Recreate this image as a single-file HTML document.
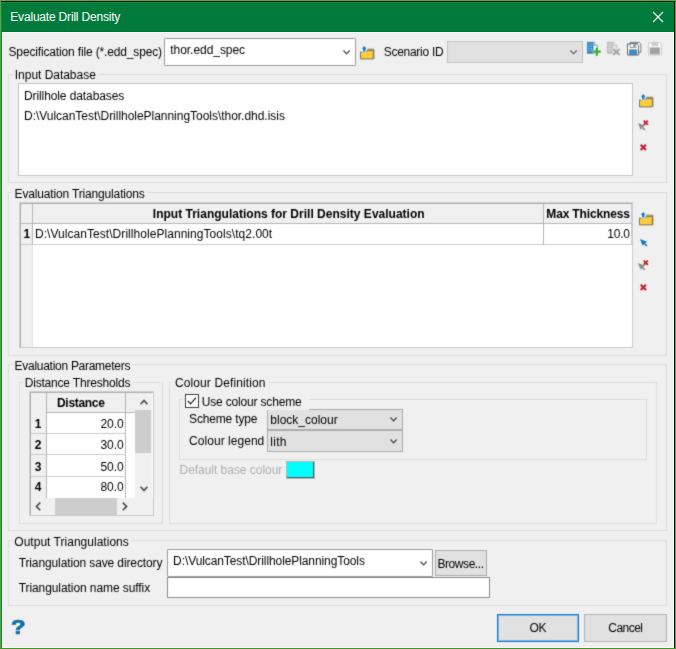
<!DOCTYPE html>
<html><head><meta charset="utf-8"><title>Evaluate Drill Density</title>
<style>
html,body{margin:0;padding:0;background:#f0f0f0;}
body{width:676px;height:649px;overflow:hidden;position:relative;font:12px/16px "Liberation Sans",sans-serif;color:#000;}
#win{position:absolute;left:0;top:0;width:676px;height:649px;background:#f0f0f0;overflow:hidden;}
#win *{box-sizing:border-box;}
.a{position:absolute;}
.t{position:absolute;white-space:pre;line-height:16px;font-size:12px;}
.grp{position:absolute;border:1px solid #dddddd;}
svg{position:absolute;overflow:visible;}
#c{position:absolute;left:0;top:0;width:676px;height:649px;filter:url(#soft);}

</style></head>
<body>
<svg width="0" height="0" style="position:absolute"><defs><filter id="soft" x="0" y="0" width="100%" height="100%" color-interpolation-filters="sRGB"><feConvolveMatrix order="3" kernelMatrix="0.02 0.09 0.02 0.09 0.56 0.09 0.02 0.09 0.02" divisor="1" edgeMode="duplicate" preserveAlpha="false"/></filter></defs></svg>
<div id="win">
<!-- window frame -->
<div class="a" style="left:0;top:0;width:676px;height:649px;background:#56a437;"></div>
<div class="a" style="left:0;top:0;width:676px;height:1px;background:#5aaf3e;"></div>
<div class="a" style="left:675px;top:0;width:1px;height:649px;background:#56ae3c;"></div>
<div class="a" style="left:0;top:648px;width:676px;height:1px;background:#3f9726;"></div>
<div class="a" style="left:1px;top:1px;width:674px;height:647px;background:#0a0a0a;"></div>
<div class="a" style="left:1px;top:2px;width:673px;height:646px;background:#158745;"></div>
<div class="a" style="left:2px;top:2px;width:672px;height:1px;background:#188a50;"></div>
<div class="a" style="left:2px;top:3px;width:672px;height:29px;background:#007b3b;"></div>
<div class="a" style="left:2px;top:31px;width:672px;height:1px;background:#007636;"></div>
<div class="a" style="left:2px;top:32px;width:672px;height:616px;background:#fbf7fb;"></div>
<div class="a" style="left:673px;top:33px;width:1px;height:615px;background:#fff;"></div>
<div class="a" style="left:2px;top:33px;width:1px;height:614px;background:#f2ecf0;"></div>
<div class="a" style="left:3px;top:33px;width:670px;height:614px;background:#f0f0f0;"></div>
<!-- close X -->
<svg style="left:653px;top:12px" width="10" height="10" viewBox="0 0 10 10"><path d="M0 0L10 10M10 0L0 10" stroke="#fff" stroke-width="1.1" fill="none"/></svg>

<span class="t" style="left:10.3px;top:8.9px;letter-spacing:-0.19px;color:#fff;">Evaluate Drill Density</span>
<div id="c">
<!-- spec combobox -->
<div class="a" style="left:164px;top:38px;width:192px;height:28px;background:#fff;border:1px solid #9a9a9a;border-radius:1px;"></div>
<svg style="left:342.5px;top:50.2px" width="8" height="5" viewBox="0 0 8 5"><path d="M0.5 0.5L3.6 3.8L6.7 0.5" stroke="#3c3c3c" stroke-width="1.15" fill="none"/></svg>
<!-- scenario combobox -->
<div class="a" style="left:447px;top:41px;width:136px;height:22px;background:#e1e1e1;border:1px solid #c4c4c4;"></div>
<svg style="left:570.4px;top:50.1px" width="8" height="5" viewBox="0 0 8 5"><path d="M0.5 0.5L3.6 3.8L6.7 0.5" stroke="#5a5a5a" stroke-width="1.1" fill="none"/></svg>

<!-- group 1: Input Database -->
<div class="grp" style="left:8px;top:74px;width:659px;height:109px;"></div>
<div class="a" style="left:18px;top:83px;width:615px;height:93px;background:#fff;border:1px solid #c2c5cc;"></div>

<!-- group 2: Evaluation Triangulations -->
<div class="grp" style="left:8px;top:192px;width:659px;height:164px;"></div>
<div class="a" style="left:19px;top:202px;width:614px;height:146px;background:#fff;border:1px solid #c6cad0;border-left-color:#cfcfcf;border-top-color:#cfcfcf;"></div>
<div class="a" style="left:20px;top:203px;width:612px;height:21px;background:#f0f0f0;border-bottom:1px solid #b6b6b6;"></div>
<div class="a" style="left:20px;top:203px;width:13px;height:144px;background:#f0f0f0;"></div>
<div class="a" style="left:32px;top:204px;width:1px;height:41px;background:#b6b6b6;"></div>
<div class="a" style="left:32px;top:245px;width:1px;height:102px;background:#e4e4e4;"></div>
<div class="a" style="left:20px;top:203px;width:612px;height:1px;background:#b0b0b0;"></div>
<div class="a" style="left:20px;top:203px;width:1px;height:144px;background:#b0b0b0;"></div>
<div class="a" style="left:21px;top:244px;width:611px;height:1px;background:#cccccc;"></div>
<div class="a" style="left:21px;top:223px;width:12px;height:1px;background:#b6b6b6;"></div>
<div class="a" style="left:543px;top:204px;width:1px;height:41px;background:#b4b4b4;"></div>
<div class="a" style="left:631px;top:204px;width:1px;height:41px;background:#cccccc;"></div>

<!-- group 3: Evaluation Parameters -->
<div class="grp" style="left:8px;top:364px;width:659px;height:167px;"></div>
<div class="grp" style="left:19px;top:382px;width:144px;height:142px;"></div>
<div class="grp" style="left:169px;top:382px;width:488px;height:142px;"></div>
<div class="grp" style="left:179px;top:399px;width:468px;height:61px;"></div>

<!-- distance table -->
<div class="a" style="left:29px;top:391px;width:125px;height:125px;background:#fff;border:1px solid #c6cad0;border-left-color:#cfcfcf;border-top-color:#cfcfcf;"></div>
<div class="a" style="left:30px;top:392px;width:105px;height:21px;background:#f0f0f0;border-bottom:1px solid #b6b6b6;"></div>
<div class="a" style="left:30px;top:392px;width:17px;height:106px;background:#f0f0f0;border-right:1px solid #b6b6b6;"></div>
<div class="a" style="left:125px;top:393px;width:1px;height:105px;background:#b4b4b4;"></div>
<div class="a" style="left:31px;top:433px;width:95px;height:1px;background:#cccccc;"></div>
<div class="a" style="left:31px;top:454px;width:95px;height:1px;background:#cccccc;"></div>
<div class="a" style="left:31px;top:476px;width:95px;height:1px;background:#cccccc;"></div>
<!-- v scrollbar -->
<div class="a" style="left:135px;top:392px;width:17px;height:106px;background:#f0f0f0;"></div>
<div class="a" style="left:135px;top:410px;width:16px;height:43px;background:#cdcdcd;"></div>
<svg style="left:139.7px;top:398.8px" width="8" height="6" viewBox="0 0 8 6"><path d="M0.6 5.2L4 1.4L7.4 5.2" stroke="#484848" stroke-width="1.6" fill="none"/></svg>
<svg style="left:139.7px;top:485.8px" width="8" height="6" viewBox="0 0 8 6"><path d="M0.6 0.8L4 4.6L7.4 0.8" stroke="#484848" stroke-width="1.6" fill="none"/></svg>
<!-- h scrollbar -->
<div class="a" style="left:30px;top:498px;width:123px;height:17px;background:#f0f0f0;"></div>
<div class="a" style="left:55px;top:498px;width:62px;height:17px;background:#cdcdcd;"></div>
<svg style="left:35.3px;top:502px" width="6" height="9" viewBox="0 0 6 9"><path d="M5.2 0.6L1.4 4.4L5.2 8.2" stroke="#484848" stroke-width="1.6" fill="none"/></svg>
<svg style="left:122.4px;top:502px" width="6" height="9" viewBox="0 0 6 9"><path d="M0.8 0.6L4.6 4.4L0.8 8.2" stroke="#484848" stroke-width="1.6" fill="none"/></svg>
<div class="a" style="left:30px;top:392px;width:123px;height:1px;background:#b0b0b0;"></div>
<div class="a" style="left:30px;top:392px;width:1px;height:123px;background:#b0b0b0;"></div>

<!-- scheme combos -->
<div class="a" style="left:267px;top:409px;width:136px;height:21px;background:#e1e1e1;border:1px solid #adadad;"></div>
<div class="a" style="left:267px;top:430px;width:136px;height:22px;background:#e1e1e1;border:1px solid #adadad;"></div>
<svg style="left:390.2px;top:417.2px" width="8" height="5" viewBox="0 0 8 5"><path d="M0.5 0.5L3.6 3.8L6.7 0.5" stroke="#3c3c3c" stroke-width="1.15" fill="none"/></svg>
<svg style="left:390.2px;top:439.2px" width="8" height="5" viewBox="0 0 8 5"><path d="M0.5 0.5L3.6 3.8L6.7 0.5" stroke="#3c3c3c" stroke-width="1.15" fill="none"/></svg>
<!-- checkbox -->
<div class="a" style="left:183px;top:392px;width:126px;height:18px;background:#f0f0f0;"></div>
<div class="a" style="left:185px;top:394px;width:14px;height:14px;background:#fff;border:1px solid #3c3c3c;"></div>
<svg style="left:185px;top:394px" width="14" height="14" viewBox="0 0 14 14"><path d="M2.8 7L5.6 9.9L11 3.6" stroke="#222" stroke-width="1.3" fill="none"/></svg>
<!-- swatch -->
<div class="a" style="left:286px;top:461px;width:29px;height:18px;background:#00ffff;border:1px solid #b6b6b6;"></div>
<div class="a" style="left:287px;top:462px;width:27px;height:16px;background:#00ffff;border-right:1px solid #4c6464;border-bottom:1px solid #4c6464;"></div>

<!-- group 4: Output -->
<div class="grp" style="left:8px;top:540px;width:659px;height:66px;"></div>
<div class="a" style="left:167px;top:549px;width:266px;height:28px;background:#fff;border:1px solid #9a9a9a;border-radius:1px;"></div>
<svg style="left:420px;top:561.2px" width="8" height="5" viewBox="0 0 8 5"><path d="M0.5 0.5L3.6 3.8L6.7 0.5" stroke="#3c3c3c" stroke-width="1.15" fill="none"/></svg>
<div class="a" style="left:435px;top:550px;width:52px;height:26px;background:#e1e1e1;border:1px solid #adadad;"></div>
<div class="a" style="left:167px;top:577px;width:323px;height:21px;background:#fff;border:1px solid #8a8a8a;"></div>

<!-- buttons -->
<div class="a" style="left:497px;top:614px;width:82px;height:28px;background:#e1e1e1;border:1px solid #0a7cd9;box-shadow:inset 0 0 0 1px rgba(0,120,215,0.42);"></div>
<div class="a" style="left:584px;top:614px;width:83px;height:28px;background:#e1e1e1;border:1px solid #b4b4b4;"></div>
<!-- help -->
<span class="t" style="left:10.7px;top:615.1px;font-size:21px;line-height:24px;font-weight:bold;color:#0e6ea8;-webkit-text-stroke:0.7px #0e6ea8;transform:scaleX(1.14);transform-origin:0 0;">?</span>

<svg style="left:359.5px;top:45.5px" width="15" height="14" viewBox="0 0 15 14">
<path d="M6.6 5.4L7.6 3.2H13.9V12.9" fill="#e8c46a" stroke="#6a675c" stroke-width="0.8" stroke-linejoin="round"/>
<path d="M0.5 6H5.9L7.9 4.6H13.3V12.9H0.5Z" fill="#fecb3a" stroke="#716c58" stroke-width="0.9" stroke-linejoin="round"/>
<path d="M4.2 -0.5L7.3 3.1H6V6.1H2.5V3.1H1.1Z" fill="#f6f6f6" stroke="#f6f6f6" stroke-width="0.8" stroke-linejoin="round"/>
<path d="M4.2 0L6.7 2.8H5.5V5.5H3V2.8H1.7Z" fill="#1a7fc0"/>
</svg>
<svg style="left:586.9px;top:42px" width="14" height="14" viewBox="0 0 14 14">
<path d="M0.3 0.2H7.2L10.6 3.6V11.4H0.3Z" fill="#fff" stroke="#6a7a88" stroke-width="0.6"/>
<path d="M0.3 0.2H6.4V11.4H0.3Z" fill="#1f7fc2"/>
<path d="M1.4 2.2H5.2M1.4 4.4H5.2M1.4 6.6H5.2M1.4 8.8H5.2" stroke="#bfe0f5" stroke-width="0.9"/>
<path d="M3.2 1V10.6" stroke="#1f7fc2" stroke-width="0.7"/>
<path d="M7.2 0.2V3.6H10.6" fill="#d8dde2" stroke="#6a7a88" stroke-width="0.6"/>
<path d="M9.8 5.2V13.8M5.6 9.6H14" stroke="#f0f0f0" stroke-width="3.4"/>
<path d="M9.8 5.6V13.7M5.8 9.65H13.8" stroke="#3aaa35" stroke-width="2.2"/>
</svg>
<svg style="left:607.2px;top:42px" width="14" height="14" viewBox="0 0 14 14">
<path d="M0.3 0.2H6.6L9.8 3.4V11.4H0.3Z" fill="#e4e4e4" stroke="#b4b4b4" stroke-width="0.6"/>
<path d="M0.3 0.2H5.8V11.4H0.3Z" fill="#bdbdbd"/>
<path d="M1.2 2.2H4.8M1.2 4.4H4.8M1.2 6.6H4.8M1.2 8.8H4.8" stroke="#e6e6e6" stroke-width="0.9"/>
<path d="M3 1V10.6" stroke="#bdbdbd" stroke-width="0.7"/>
<path d="M6.6 0.2V3.4H9.8" fill="#eee" stroke="#b4b4b4" stroke-width="0.6"/>
<path d="M6 6.7L12.8 13.1M12.8 6.7L6 13.1" stroke="#f0f0f0" stroke-width="3.2"/>
<path d="M6.2 6.9L12.6 12.9M12.6 6.9L6.2 12.9" stroke="#a4a4a4" stroke-width="2"/>
</svg>
<svg style="left:626.6px;top:41.6px" width="15" height="14" viewBox="0 0 15 14">
<path d="M3.3 0.4H12.2L13.8 2V10.2H3.3Z" fill="#fff" stroke="#5a5a5a" stroke-width="0.8"/>
<path d="M5.5 0.4H10.6V1.6H5.5Z" fill="#fff" stroke="#5a5a5a" stroke-width="0.6"/>
<path d="M0.5 1.8H10L11.6 3.4V13H0.5Z" fill="#fff" stroke="#5a5a5a" stroke-width="0.9"/>
<path d="M3.2 1.8H8.8V5.6H3.2Z" fill="#fff" stroke="#5a5a5a" stroke-width="0.7"/>
<path d="M6.3 2.6H8V4.8H6.3Z" fill="#3a8fca"/>
<path d="M2.4 7.8H9.8V12.8H2.4Z" fill="#3a8fca" stroke="#4a6a80" stroke-width="0.6"/>
</svg>
<svg style="left:647.8px;top:42.3px" width="14" height="13" viewBox="0 0 14 13">
<path d="M0.5 0.4H11.6L13.3 2.1V12.9H0.5Z" fill="#fafafa" stroke="#c6c6c6" stroke-width="0.9"/>
<path d="M3.6 0.5H10.2V3.8H3.6Z" fill="#c9c9c9"/>
<path d="M1.8 5.4H11.8V12.3H1.8Z" fill="#a3a3a3"/>
</svg>
<svg style="left:639px;top:93.7px" width="15" height="14" viewBox="0 0 15 14">
<path d="M6.6 5.4L7.6 3.2H13.9V12.9" fill="#e8c46a" stroke="#6a675c" stroke-width="0.8" stroke-linejoin="round"/>
<path d="M0.5 6H5.9L7.9 4.6H13.3V12.9H0.5Z" fill="#fecb3a" stroke="#716c58" stroke-width="0.9" stroke-linejoin="round"/>
<path d="M4.2 -0.5L7.3 3.1H6V6.1H2.5V3.1H1.1Z" fill="#f6f6f6" stroke="#f6f6f6" stroke-width="0.8" stroke-linejoin="round"/>
<path d="M4.2 0L6.7 2.8H5.5V5.5H3V2.8H1.7Z" fill="#1a7fc0"/>
</svg>
<svg style="left:637.8px;top:122.5px" width="8" height="8" viewBox="0 0 8 8">
<path d="M0 0L7 2.7L5.1 3.9L7.4 6.2L6.2 7.4L3.9 5.1L2.7 7Z" fill="#8c8c8c"/>
</svg>
<svg style="left:643.3px;top:119.6px" width="5.6" height="5.6" viewBox="0 0 5.6 5.6">
<path d="M0.7 0.7L4.8999999999999995 4.8999999999999995M4.8999999999999995 0.7L0.7 4.8999999999999995" stroke="#c4202c" stroke-width="1.9" fill="none"/>
</svg>
<svg style="left:640.1px;top:143.9px" width="6.7" height="6.7" viewBox="0 0 6.7 6.7">
<path d="M0.7 0.7L6.0 6.0M6.0 0.7L0.7 6.0" stroke="#c4202c" stroke-width="2.2" fill="none"/>
</svg>
<svg style="left:639px;top:211.6px" width="15" height="14" viewBox="0 0 15 14">
<path d="M6.6 5.4L7.6 3.2H13.9V12.9" fill="#e8c46a" stroke="#6a675c" stroke-width="0.8" stroke-linejoin="round"/>
<path d="M0.5 6H5.9L7.9 4.6H13.3V12.9H0.5Z" fill="#fecb3a" stroke="#716c58" stroke-width="0.9" stroke-linejoin="round"/>
<path d="M4.2 -0.5L7.3 3.1H6V6.1H2.5V3.1H1.1Z" fill="#f6f6f6" stroke="#f6f6f6" stroke-width="0.8" stroke-linejoin="round"/>
<path d="M4.2 0L6.7 2.8H5.5V5.5H3V2.8H1.7Z" fill="#1a7fc0"/>
</svg>
<svg style="left:639.9px;top:238.7px" width="8" height="8" viewBox="0 0 8 8">
<path d="M0 0L7 2.7L5.1 3.9L7.4 6.2L6.2 7.4L3.9 5.1L2.7 7Z" fill="#1278b6"/>
</svg>
<svg style="left:637.8px;top:262.5px" width="8" height="8" viewBox="0 0 8 8">
<path d="M0 0L7 2.7L5.1 3.9L7.4 6.2L6.2 7.4L3.9 5.1L2.7 7Z" fill="#8c8c8c"/>
</svg>
<svg style="left:643.3px;top:259.7px" width="5.6" height="5.6" viewBox="0 0 5.6 5.6">
<path d="M0.7 0.7L4.8999999999999995 4.8999999999999995M4.8999999999999995 0.7L0.7 4.8999999999999995" stroke="#c4202c" stroke-width="1.9" fill="none"/>
</svg>
<svg style="left:640.1px;top:283.8px" width="6.7" height="6.7" viewBox="0 0 6.7 6.7">
<path d="M0.7 0.7L6.0 6.0M6.0 0.7L0.7 6.0" stroke="#c4202c" stroke-width="2.2" fill="none"/>
</svg>
<span class="t" style="left:8.5px;top:44.0px;letter-spacing:-0.15px;">Specification file (*.edd_spec)</span>
<span class="t" style="left:170.3px;top:41.9px;letter-spacing:-0.05px;">thor.edd_spec</span>
<span class="t" style="left:383.7px;top:44.2px;letter-spacing:-0.27px;">Scenario ID</span>
<span class="t" style="left:14.8px;top:69.4px;letter-spacing:-0.03px;background:#f0f0f0;padding:0 2px;margin-left:-2px;line-height:12px;">Input Database</span>
<span class="t" style="left:24.0px;top:87.7px;letter-spacing:-0.10px;">Drillhole databases</span>
<span class="t" style="left:24.0px;top:107.6px;letter-spacing:-0.03px;">D:\VulcanTest\DrillholePlanningTools\thor.dhd.isis</span>
<span class="t" style="left:14.6px;top:187.5px;letter-spacing:-0.16px;background:#f0f0f0;padding:0 2px;margin-left:-2px;line-height:12px;">Evaluation Triangulations</span>
<span class="t" style="left:152.8px;top:206.0px;letter-spacing:0.01px;font-weight:bold;">Input Triangulations for Drill Density Evaluation</span>
<span class="t" style="left:546.3px;top:206.0px;letter-spacing:-0.15px;font-weight:bold;">Max Thickness</span>
<span class="t" style="left:23.5px;top:226.2px;letter-spacing:0.00px;font-weight:bold;">1</span>
<span class="t" style="left:35.0px;top:226.2px;letter-spacing:0.05px;">D:\VulcanTest\DrillholePlanningTools\tq2.00t</span>
<span class="t" style="left:607.3px;top:226.0px;letter-spacing:-0.25px;">10.0</span>
<span class="t" style="left:14.6px;top:359.5px;letter-spacing:-0.28px;background:#f0f0f0;padding:0 2px;margin-left:-2px;line-height:12px;">Evaluation Parameters</span>
<span class="t" style="left:24.7px;top:376.6px;letter-spacing:-0.19px;background:#f0f0f0;padding:0 2px;margin-left:-2px;line-height:12px;">Distance Thresholds</span>
<span class="t" style="left:57.0px;top:395.3px;letter-spacing:-0.30px;font-weight:bold;">Distance</span>
<span class="t" style="left:34.7px;top:415.8px;letter-spacing:0.00px;font-weight:bold;">1</span>
<span class="t" style="left:34.7px;top:437.2px;letter-spacing:0.00px;font-weight:bold;">2</span>
<span class="t" style="left:34.7px;top:458.5px;letter-spacing:0.00px;font-weight:bold;">3</span>
<span class="t" style="left:34.7px;top:479.4px;letter-spacing:0.00px;font-weight:bold;">4</span>
<span class="t" style="left:100.5px;top:415.8px;letter-spacing:-0.05px;">20.0</span>
<span class="t" style="left:100.5px;top:437.2px;letter-spacing:-0.05px;">30.0</span>
<span class="t" style="left:100.5px;top:458.5px;letter-spacing:-0.05px;">50.0</span>
<span class="t" style="left:100.5px;top:479.4px;letter-spacing:-0.05px;">80.0</span>
<span class="t" style="left:174.9px;top:376.5px;letter-spacing:0.12px;background:#f0f0f0;padding:0 2px;margin-left:-2px;line-height:12px;">Colour Definition</span>
<span class="t" style="left:201.8px;top:395.8px;letter-spacing:-0.18px;background:#f0f0f0;padding:0 2px;margin-left:-2px;line-height:12px;">Use colour scheme</span>
<span class="t" style="left:189.1px;top:410.7px;letter-spacing:-0.17px;">Scheme type</span>
<span class="t" style="left:270.3px;top:411.7px;letter-spacing:0.00px;">block_colour</span>
<span class="t" style="left:189.1px;top:432.6px;letter-spacing:0.04px;">Colour legend</span>
<span class="t" style="left:270.3px;top:433.8px;letter-spacing:0.29px;">lith</span>
<span class="t" style="left:179.5px;top:461.9px;letter-spacing:-0.03px;color:#b0b0b0;">Default base colour</span>
<span class="t" style="left:14.3px;top:535.5px;letter-spacing:0.02px;background:#f0f0f0;padding:0 2px;margin-left:-2px;line-height:12px;">Output Triangulations</span>
<span class="t" style="left:18.7px;top:555.0px;letter-spacing:-0.12px;">Triangulation save directory</span>
<span class="t" style="left:173.1px;top:552.9px;letter-spacing:-0.09px;">D:\VulcanTest\DrillholePlanningTools</span>
<span class="t" style="left:18.7px;top:579.6px;letter-spacing:-0.08px;">Triangulation name suffix</span>
<span class="t" style="left:437.5px;top:556.0px;letter-spacing:-0.44px;">Browse...</span>
<span class="t" style="left:529.6px;top:620.2px;letter-spacing:-0.54px;">OK</span>
<span class="t" style="left:608.3px;top:620.2px;letter-spacing:-0.53px;">Cancel</span>
</div>
</div>
</body></html>
